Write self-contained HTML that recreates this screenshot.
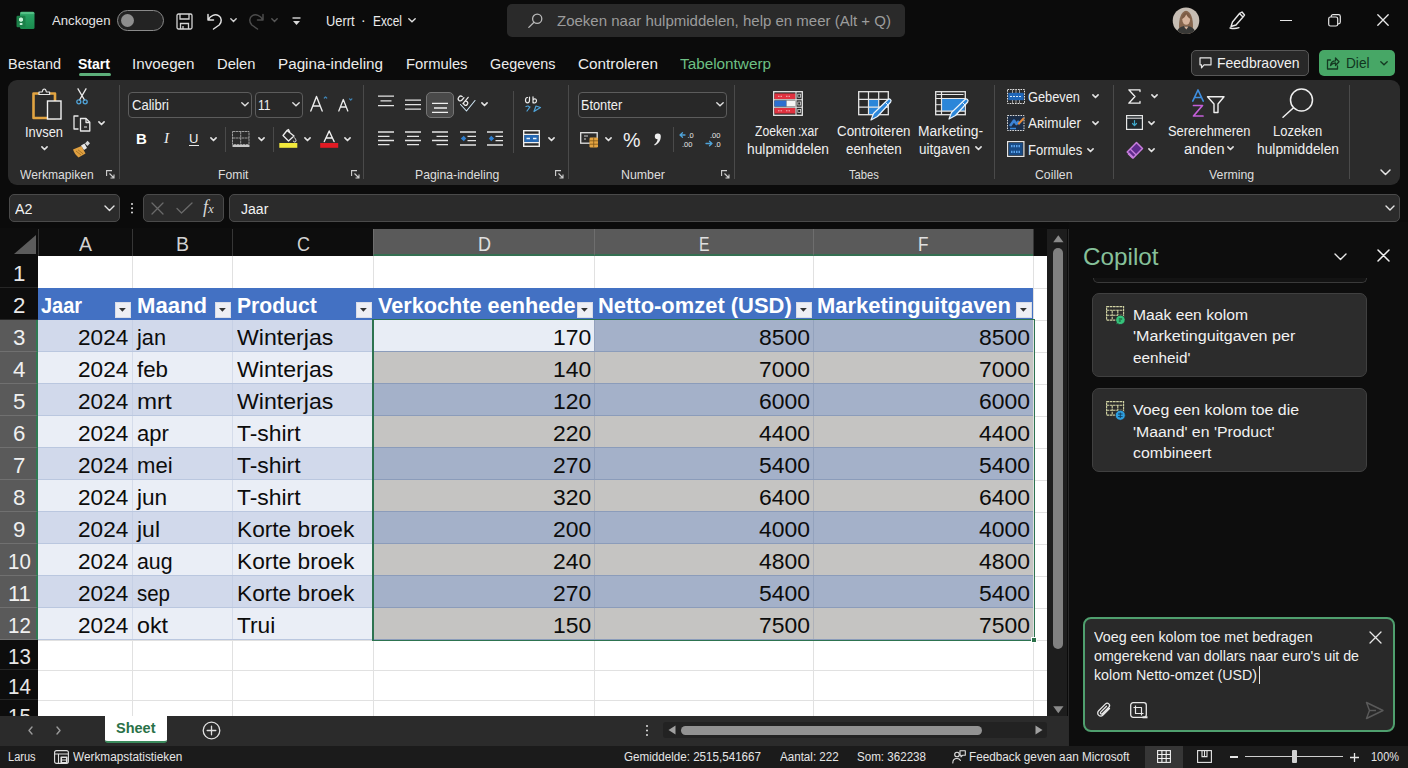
<!DOCTYPE html>
<html lang="nl"><head><meta charset="utf-8"><title>Excel</title>
<style>
*{box-sizing:border-box;margin:0;padding:0}
html,body{width:1408px;height:768px;overflow:hidden;background:#0b0b0b;font-family:"Liberation Sans",sans-serif;color:#e8e8e8}
body{position:relative}
.a{position:absolute}
.t{position:absolute;white-space:nowrap;line-height:1}
svg{position:absolute;overflow:visible}
/* title */
#search{left:507px;top:4px;width:398px;height:33px;background:#2a2a2a;border-radius:5px}
/* tabs */
.tab{font-size:16px;color:#ececec;top:55px}
/* ribbon */
#ribbon{left:8px;top:79.500px;width:1392px;height:105px;background:#2b2b2b;border-radius:9px}
.gl{font-size:13px;color:#d8d8d8;top:168px}
.sep{width:1px;background:#4a4a4a;top:88px;height:92px}
.rb{font-size:14.5px;color:#f0f0f0}
.combo{background:#282828;border:1px solid #5c5c5c;border-radius:4px;height:25px}
/* formula bar */
.fb{background:#2b2b2b;border:1px solid #4a4a4a;border-radius:5px;top:194px;height:28px}
/* grid */
#sheet{left:0;top:228px;width:1047px;height:488px;background:#fff;overflow:hidden}
.ch{top:1px;height:27px;background:#0d0d0d;color:#e2e2e2;font-size:21px;text-align:center;line-height:29px}
.ch.sel{background:#595959;border-bottom:2px solid #3c7a55}
.rh{left:0;width:38px;background:#0d0d0d;color:#ededed;font-size:22px;text-align:center;border-bottom:1px solid #2b2b2b}
.rh.sel{background:#5b5b5b;border-bottom:1px solid #6d6d6d;border-right:2px solid #3c7a55}
.c{position:absolute;font-size:24px;color:#111;white-space:nowrap;overflow:hidden}
.c span{position:absolute;top:0;line-height:inherit;display:inline-block;transform-origin:0 50%}
.c span.r{transform-origin:100% 50%}
.hd{background:#4472c4;color:#fff;font-weight:bold}
.fbtn{position:absolute;width:16px;height:16px;background:#e9edf4;border:1px solid #c9d1e0;right:2px;bottom:3px}
.fbtn:after{content:"";position:absolute;left:3px;top:5px;border-left:4px solid transparent;border-right:4px solid transparent;border-top:5px solid #333}
/* copilot */
.card{background:#2c2c2c;border:1px solid #404040;border-radius:7px;left:1092px;width:275px}
.ct{font-size:15.5px;color:#f2f2f2;line-height:21.5px;position:absolute;white-space:nowrap}
/* status */
#status{left:0;top:746px;width:1408px;height:22px;background:#1b1b1b}
.st{font-size:12.5px;color:#e6e6e6;top:751px}
</style></head><body>
<!-- TITLE BAR -->
<svg style="left:16px;top:11px" width="19" height="19" viewBox="0 0 19 19">
 <defs><linearGradient id="xg" x1="0" y1="0" x2="0" y2="1"><stop offset="0" stop-color="#3fb274"/><stop offset=".25" stop-color="#27a062"/><stop offset="1" stop-color="#1a8a4d"/></linearGradient></defs>
 <rect x="4" y=".7" width="14.500" height="17.300" rx="1.500" fill="url(#xg)"/>
 <rect x="4.500" y=".9" width="13.500" height="2" rx="1" fill="#5cc48c" opacity=".8"/>
 <rect x=".5" y="4.700" width="9" height="11.600" rx="1.200" fill="#1c8049"/>
 <path d="M3 7.500 5 6.300 7 7.500v2.300L5 11 3 9.800zM3.800 12h2.600v2H3.800z" fill="#c9f2da"/>
</svg>
<div class="t" style="left:51.5px;top:14.3px;font-size:13.5px;color:#e4e4e4;transform:scaleX(0.9742);transform-origin:0 0;">Anckogen</div>
<div class="a" style="left:117px;top:10px;width:47px;height:21px;border:1.5px solid #8a8a8a;border-radius:11px;background:#232323"></div>
<div class="a" style="left:121px;top:14px;width:13px;height:13px;border-radius:50%;background:#8e8e8e"></div>
<!-- save -->
<svg style="left:176px;top:13px" width="17" height="17" viewBox="0 0 17 17" fill="none" stroke="#d4d4d4" stroke-width="1.3">
 <rect x="1" y="1" width="15" height="15" rx="1.5"/><path d="M4 1v5h9V1M4.5 16v-5.5h8V16M7 13v3"/>
</svg>
<!-- undo -->
<svg style="left:206px;top:12px" width="17" height="18" viewBox="0 0 17 18" fill="none" stroke="#e0e0e0" stroke-width="1.5" stroke-linecap="round" stroke-linejoin="round">
 <path d="M2 2.5v5.5h5.5M2.3 7.6C4.5 3.6 9 1.6 12.6 3.6c3.4 2 3.4 6.6 0.6 9.4L7.5 17"/>
</svg>
<svg style="left:230px;top:18px" width="7" height="5" viewBox="0 0 7 5" fill="none" stroke="#d0d0d0" stroke-width="1.4" stroke-linecap="round"><path d="M.8.8 3.5 3.6 6.2.8"/></svg>
<!-- redo dim -->
<svg style="left:248px;top:12px" width="17" height="18" viewBox="0 0 17 18" fill="none" stroke="#4c4c4c" stroke-width="1.5" stroke-linecap="round" stroke-linejoin="round">
 <path d="M15 2.5v5.5H9.5M14.7 7.6C12.5 3.6 8 1.6 4.4 3.6 1 5.6 1 10.200 3.800 13l5.700 4"/>
</svg>
<svg style="left:271px;top:18px" width="7" height="5" viewBox="0 0 7 5" fill="none" stroke="#565656" stroke-width="1.4" stroke-linecap="round"><path d="M.8.8 3.5 3.6 6.2.8"/></svg>
<!-- customize -->
<svg style="left:292px;top:17px" width="9" height="9" viewBox="0 0 9 9"><path d="M.5 1h8" stroke="#d8d8d8" stroke-width="1.4"/><path d="M1 4h7L4.500 8z" fill="#d8d8d8"/></svg>
<div class="t" style="left:326px;top:14px;font-size:14px;color:#ececec;transform:scaleX(0.9161);transform-origin:0 0;">Uerrt</div>
<div class="t" style="left:361px;top:13px;font-size:14px;color:#ececec">&middot;</div>
<div class="t" style="left:372.5px;top:14px;font-size:14px;color:#ececec;transform:scaleX(0.8471);transform-origin:0 0;">Excel</div>
<svg style="left:408px;top:18px" width="8" height="5" viewBox="0 0 8 5" fill="none" stroke="#e0e0e0" stroke-width="1.4" stroke-linecap="round"><path d="M.8.8 4 3.800 7.200.8"/></svg>
<!-- search -->
<div class="a" id="search"></div>
<svg style="left:528px;top:13px" width="15" height="15" viewBox="0 0 15 15" fill="none" stroke="#b8b8b8" stroke-width="1.3" stroke-linecap="round"><circle cx="9.2" cy="5.800" r="4.600"/><path d="M6 9.200.8 14.400"/></svg>
<div class="t" style="left:557px;top:13px;font-size:15px;color:#9c9c9c">Zoeken naar hulpmiddelen, help en meer (Alt + Q)</div>
<!-- avatar -->
<svg style="left:1172px;top:7px" width="28" height="28" viewBox="0 0 28 28">
 <defs><clipPath id="av"><circle cx="14" cy="13.700" r="13.300"/></clipPath></defs>
 <g clip-path="url(#av)"><rect width="28" height="28" fill="#c6bdb3"/>
 <path d="M7.800 28C6 18 7 5 14 3.800 21 5 22 18 20.200 28z" fill="#86664e"/>
 <ellipse cx="14.200" cy="12.500" rx="3.900" ry="5.200" fill="#d6b49c"/>
 <path d="M9.800 12c.3-4.500 2.500-6.500 4.700-6.300 2.300.2 3.800 2.500 3.800 6-1.800-.8-3.200-2.500-4-4.500-.8 2.300-2.500 4-4.500 4.800z" fill="#7c5c45"/>
 <path d="M4 28c.5-6 4.500-9 10-9s9.500 3 10 9z" fill="#383836"/>
 <path d="M12 19.500l2.300 3 2.200-3z" fill="#d2b19a"/></g>
</svg>
<!-- pen -->
<svg style="left:1228px;top:11px" width="18" height="18" viewBox="0 0 18 18" fill="none" stroke="#e8e8e8" stroke-width="1.400" stroke-linejoin="round" stroke-linecap="round">
 <path d="M11.500 2.500 14 1l2.500 3-1.500 2M11.500 2.500 15 6 8 14l-5 1.500L4.500 11z M2 17c3 .8 6 .8 9-.300"/>
</svg>
<!-- window controls -->
<div class="a" style="left:1280px;top:19.500px;width:12px;height:1.300px;background:#e6e6e6"></div>
<svg style="left:1328px;top:14px" width="13" height="13" viewBox="0 0 13 13" fill="none" stroke="#e6e6e6" stroke-width="1.200"><rect x=".7" y="3" width="9" height="9" rx="1.800"/><path d="M3.200 3V2.500c0-1 .8-1.800 1.800-1.800h5.500c1 0 1.800.8 1.800 1.800V8c0 1-.8 1.800-1.800 1.800h-.5"/></svg>
<svg style="left:1377px;top:14px" width="12" height="12" viewBox="0 0 12 12" stroke="#eaeaea" stroke-width="1.300" stroke-linecap="round"><path d="M.8.8 11.200 11.200M11.200.8.8 11.200"/></svg>
<!-- TABS -->
<div class="t" style="left:8px;top:55.6px;font-size:15.5px;color:#ececec;transform:scaleX(0.9318);transform-origin:0 0;">Bestand</div>
<div class="t" style="left:78px;top:55.6px;font-size:15.5px;color:#fff;font-weight:bold;transform:scaleX(0.9061);transform-origin:0 0;">Start</div>
<div class="a" style="left:78.500px;top:73.400px;width:32.500px;height:2.500px;border-radius:1.500px;background:#5cae79"></div>
<div class="t" style="left:132px;top:55.6px;font-size:15.5px;color:#ececec;transform:scaleX(0.9799);transform-origin:0 0;">Invoegen</div>
<div class="t" style="left:217px;top:55.6px;font-size:15.5px;color:#ececec;transform:scaleX(0.9506);transform-origin:0 0;">Delen</div>
<div class="t" style="left:278px;top:55.6px;font-size:15.5px;color:#ececec;transform:scaleX(0.9826);transform-origin:0 0;">Pagina-indeling</div>
<div class="t" style="left:406px;top:55.6px;font-size:15.5px;color:#ececec;transform:scaleX(0.9520);transform-origin:0 0;">Formules</div>
<div class="t" style="left:490px;top:55.6px;font-size:15.5px;color:#ececec;transform:scaleX(0.9270);transform-origin:0 0;">Gegevens</div>
<div class="t" style="left:578px;top:55.6px;font-size:15.5px;color:#ececec;transform:scaleX(0.9877);transform-origin:0 0;">Controleren</div>
<div class="t" style="left:680px;top:55.6px;font-size:15.5px;color:#6ec084;transform:scaleX(0.9870);transform-origin:0 0;">Tabelontwerp</div>
<div class="a" style="left:1191px;top:50px;width:118px;height:26px;background:#282828;border:1px solid #585858;border-radius:5px"></div>
<svg style="left:1199px;top:57px" width="13" height="12" viewBox="0 0 13 12" fill="none" stroke="#e6e6e6" stroke-width="1.200" stroke-linejoin="round"><path d="M1 .8h11v7H5L2.500 10.800V7.800H1z"/></svg>
<div class="t" style="left:1216.5px;top:55px;font-size:15px;color:#f0f0f0;transform:scaleX(0.9333);transform-origin:0 0;">Feedbraoven</div>
<div class="a" style="left:1319px;top:50px;width:76px;height:26px;background:#47a766;border-radius:5px"></div>
<svg style="left:1326px;top:56px" width="14" height="14" viewBox="0 0 14 14" fill="none" stroke="#153a22" stroke-width="1.300" stroke-linejoin="round" stroke-linecap="round"><path d="M4.500 4H1.500v9h10V10M4.500 9.500C5 6 7 4.800 9.500 4.800V2L13 5.800 9.500 9.500V7C7.500 7 6 7.500 4.500 9.500z"/></svg>
<div class="t" style="left:1346px;top:55px;font-size:15.5px;color:#113520;transform:scaleX(0.8801);transform-origin:0 0;">Diel</div>
<svg style="left:1380px;top:61px" width="8" height="5" viewBox="0 0 8 5" fill="none" stroke="#153a22" stroke-width="1.400" stroke-linecap="round"><path d="M.8.8 4 3.800 7.200.8"/></svg>
<!-- RIBBON -->
<div class="a" id="ribbon"></div>
<!-- separators -->
<div class="a sep" style="left:119px;top:85px;height:94px"></div>
<div class="a sep" style="left:363px;top:85px;height:94px"></div>
<div class="a sep" style="left:568px;top:85px;height:94px"></div>
<div class="a sep" style="left:734px;top:85px;height:94px"></div>
<div class="a sep" style="left:994px;top:85px;height:94px"></div>
<div class="a sep" style="left:1113px;top:85px;height:94px"></div>
<div class="a sep" style="left:1349px;top:85px;height:94px"></div>
<div class="a sep" style="left:225px;top:127px;height:25px"></div>
<div class="a sep" style="left:273px;top:127px;height:25px"></div>
<div class="a sep" style="left:513px;top:91px;height:62px"></div>
<div class="a sep" style="left:673px;top:127px;height:25px"></div>
<!-- group labels -->
<div class="t" style="left:19.7px;top:169.4px;font-size:12.8px;color:#dedede;transform:scaleX(0.9447);transform-origin:0 0;">Werkmapiken</div>
<div class="t" style="left:217.5px;top:169.4px;font-size:12.8px;color:#dedede;transform:scaleX(0.9531);transform-origin:0 0;">Fomit</div>
<div class="t" style="left:415.4px;top:169.4px;font-size:12.8px;color:#dedede;transform:scaleX(0.9553);transform-origin:0 0;">Pagina-indeling</div>
<div class="t" style="left:620.6px;top:169.4px;font-size:12.8px;color:#dedede;transform:scaleX(0.9665);transform-origin:0 0;">Number</div>
<div class="t" style="left:849px;top:169.4px;font-size:12.8px;color:#dedede;transform:scaleX(0.8783);transform-origin:0 0;">Tabes</div>
<div class="t" style="left:1035.3px;top:169.4px;font-size:12.8px;color:#dedede;transform:scaleX(0.9583);transform-origin:0 0;">Coillen</div>
<div class="t" style="left:1209.3px;top:169.4px;font-size:12.8px;color:#dedede;transform:scaleX(0.9625);transform-origin:0 0;">Verming</div>
<!-- dialog launchers -->
<svg style="left:106px;top:170px" width="9" height="9" viewBox="0 0 9 9" fill="none" stroke="#d0d0d0" stroke-width="1.100"><path d="M.6 6V.6H6M3.500 3.500 8 8M8 4.500V8H4.500"/></svg>
<svg style="left:351px;top:170px" width="9" height="9" viewBox="0 0 9 9" fill="none" stroke="#d0d0d0" stroke-width="1.100"><path d="M.6 6V.6H6M3.500 3.500 8 8M8 4.500V8H4.500"/></svg>
<svg style="left:555px;top:170px" width="9" height="9" viewBox="0 0 9 9" fill="none" stroke="#d0d0d0" stroke-width="1.100"><path d="M.6 6V.6H6M3.500 3.500 8 8M8 4.500V8H4.500"/></svg>
<svg style="left:721px;top:170px" width="9" height="9" viewBox="0 0 9 9" fill="none" stroke="#d0d0d0" stroke-width="1.100"><path d="M.6 6V.6H6M3.500 3.500 8 8M8 4.500V8H4.500"/></svg>
<!-- === Clipboard group === -->
<svg style="left:32px;top:88px" width="30" height="32" viewBox="0 0 30 32" fill="none">
 <path d="M1.500 5.500h21.500v24.500H1.500z" stroke="#e2a441" stroke-width="2.600" stroke-linejoin="round"/>
 <path d="M7 6.500V4h3.200C10.600 1.800 11.600 1 12.300 1s1.700.8 2.100 3H17.600v2.500z" fill="#2a2a2a" stroke="#e6e6e6" stroke-width="1.200" stroke-linejoin="round"/>
 <rect x="15.500" y="13" width="13.500" height="18" fill="#2e2e2e" stroke="#f2f2f2" stroke-width="1.400"/>
</svg>
<div class="t" style="left:25.3px;top:124.8px;font-size:14.5px;color:#f0f0f0;transform:scaleX(0.8895);transform-origin:0 0;">Invsen</div>
<svg style="left:41px;top:146px" width="7" height="5" viewBox="0 0 7 5" fill="none" stroke="#e2e2e2" stroke-width="1.650" stroke-linecap="round" stroke-linejoin="round"><path d="M.9.900 3.500 3.500 6.100.9"/></svg>
<!-- scissors -->
<svg style="left:76px;top:88px" width="12" height="17" viewBox="0 0 12 17" fill="none" stroke-linecap="round">
 <path d="M2 .8 8.500 12M10 .8 3.500 12" stroke="#ececec" stroke-width="1.300"/>
 <circle cx="2.800" cy="13.800" r="2" stroke="#4fa3d8" stroke-width="1.300"/><circle cx="9.200" cy="13.800" r="2" stroke="#4fa3d8" stroke-width="1.300"/>
</svg>
<!-- copy -->
<svg style="left:73px;top:114px" width="18" height="18" viewBox="0 0 18 18" fill="none" stroke="#e8e8e8" stroke-width="1.300" stroke-linejoin="round">
 <path d="M5.500 2H1v13h4.500"/><path d="M7.500 4.500h5.500l3.800 3.800V17H7.500z"/><path d="M13 4.500v4h3.800"/><path d="M11 13h3" stroke-width="1"/>
</svg>
<svg style="left:98px;top:121px" width="7" height="5" viewBox="0 0 7 5" fill="none" stroke="#e2e2e2" stroke-width="1.650" stroke-linecap="round" stroke-linejoin="round"><path d="M.9.900 3.500 3.500 6.100.9"/></svg>
<!-- brush -->
<svg style="left:72px;top:140px" width="19" height="18" viewBox="0 0 19 18">
 <path d="M1 9.500 9.500 6 13.500 13.500 6.500 17.500C4 15.500 2 12.500 1 9.500z" fill="#e0a040"/>
 <path d="M9 5.500 12.500 3.500 15 8 12 10z" fill="#e8e8e8"/>
 <path d="M13 3.500 15.500.8 18 3.200 15.500 6z" fill="#d8d8d8"/>
 <path d="M4 11l5 4M6 9.800l5 4" stroke="#9a6a20" stroke-width=".8"/>
</svg>
<!-- === Font group === -->
<div class="a combo" style="left:128px;top:91.500px;width:124px;height:26px"></div>
<div class="t" style="left:132px;top:98px;font-size:14px;color:#f0f0f0;transform:scaleX(0.9325);transform-origin:0 0;">Calibri</div>
<svg style="left:241px;top:102px" width="8" height="5" viewBox="0 0 8 5" fill="none" stroke="#e0e0e0" stroke-width="1.400" stroke-linecap="round"><path d="M.8.8 4 3.800 7.200.8"/></svg>
<div class="a combo" style="left:254.500px;top:91.500px;width:48px;height:26px"></div>
<div class="t" style="left:258.4px;top:98px;font-size:14px;color:#f0f0f0;transform:scaleX(0.8601);transform-origin:0 0;">11</div>
<svg style="left:292px;top:102px" width="8" height="5" viewBox="0 0 8 5" fill="none" stroke="#e0e0e0" stroke-width="1.400" stroke-linecap="round"><path d="M.8.8 4 3.800 7.200.8"/></svg>
<!-- A grow / shrink -->
<svg style="left:310px;top:95px" width="18" height="17" viewBox="0 0 18 17" fill="none" stroke="#ececec" stroke-width="1.400" stroke-linecap="round" stroke-linejoin="round"><path d="M.8 16 6.500 1.500 12.200 16M2.800 11h7.400"/><path d="M14.300 3 15.500 1.800 16.700 3" stroke="#3f86b8" stroke-width="1.200"/></svg>
<svg style="left:338px;top:97px" width="15" height="15" viewBox="0 0 15 15" fill="none" stroke="#ececec" stroke-width="1.300" stroke-linecap="round" stroke-linejoin="round"><path d="M.8 14 5.300 2.500 9.800 14M2.400 10h5.800"/><path d="M11.500 1.800 12.700 3 13.900 1.800" stroke="#3f86b8" stroke-width="1.200"/></svg>
<!-- B I U -->
<div class="t" style="left:136px;top:131px;font-size:15px;font-weight:bold;color:#fff">B</div>
<div class="t" style="left:164px;top:131px;font-size:15px;font-style:italic;font-family:'Liberation Serif',serif;color:#f0f0f0">I</div>
<div class="t" style="left:189px;top:132px;font-size:13px;color:#f0f0f0">U</div>
<div class="a" style="left:189px;top:145px;width:9.500px;height:1.200px;background:#e8e8e8"></div>
<svg style="left:209.500px;top:137px" width="7" height="5" viewBox="0 0 7 5" fill="none" stroke="#e2e2e2" stroke-width="1.650" stroke-linecap="round" stroke-linejoin="round"><path d="M.9.900 3.500 3.500 6.100.9"/></svg>
<!-- borders -->
<svg style="left:232px;top:131px" width="18" height="16" viewBox="0 0 18 16" fill="none"><path d="M.5.500h16.500v13H.5zM8.700.5v13M.5 7h16.500" stroke="#9c9c9c" stroke-width="1" stroke-dasharray="2.500 .500"/><path d="M.5 15h17" stroke="#efefef" stroke-width="1.600"/></svg>
<svg style="left:257.500px;top:137px" width="7" height="5" viewBox="0 0 7 5" fill="none" stroke="#e2e2e2" stroke-width="1.650" stroke-linecap="round" stroke-linejoin="round"><path d="M.9.900 3.500 3.500 6.100.9"/></svg>
<!-- fill -->
<svg style="left:278.500px;top:129px" width="19" height="19" viewBox="0 0 19 19" fill="none"><path d="M8 1.500 4 6.500 9.500 12 15 7z M8 1.500 9.500.5 11 3.500" stroke="#ececec" stroke-width="1.300" stroke-linejoin="round"/><path d="M15.500 8.500c1 1.500 1.500 2.500 1.500 3.200a1.300 1.300 0 0 1-2.600 0" stroke="#ececec" stroke-width="1"/><rect x=".3" y="14" width="18" height="4.800" fill="#f2e93c"/></svg>
<svg style="left:304px;top:137px" width="7" height="5" viewBox="0 0 7 5" fill="none" stroke="#e2e2e2" stroke-width="1.650" stroke-linecap="round" stroke-linejoin="round"><path d="M.9.900 3.500 3.500 6.100.9"/></svg>
<!-- font color -->
<svg style="left:319.500px;top:130px" width="19" height="18" viewBox="0 0 19 18" fill="none"><path d="M4.300 11.500 9.200 1 14.100 11.500M6 8h6.400" stroke="#f0f0f0" stroke-width="1.400" stroke-linejoin="round" stroke-linecap="round"/><rect x=".2" y="13" width="18" height="4.800" fill="#e21b24"/></svg>
<svg style="left:344px;top:137px" width="7" height="5" viewBox="0 0 7 5" fill="none" stroke="#e2e2e2" stroke-width="1.650" stroke-linecap="round" stroke-linejoin="round"><path d="M.9.900 3.500 3.500 6.100.9"/></svg>
<!-- === Alignment group === -->
<svg style="left:377.500px;top:95px" width="16" height="12" viewBox="0 0 16 12" stroke="#e4e4e4" stroke-width="1.300"><path d="M0 1.200h16M2.500 5.900h11M0 10.600h16"/></svg>
<svg style="left:405px;top:98.500px" width="16" height="12" viewBox="0 0 16 12" stroke="#e4e4e4" stroke-width="1.300"><path d="M0 1.200h16M0 5.700h16M0 10.200h16"/></svg>
<div class="a" style="left:426px;top:91.500px;width:27.500px;height:26.500px;background:#494949;border:1px solid #757575;border-radius:5px"></div>
<svg style="left:431.500px;top:102px" width="16" height="12" viewBox="0 0 16 12" stroke="#f0f0f0" stroke-width="1.300"><path d="M0 1.300h16M2 6h13M0 10.400h16"/></svg>
<!-- orientation -->
<svg style="left:459px;top:95px" width="17" height="17" viewBox="0 0 17 17" fill="none" stroke-linecap="round" stroke-linejoin="round"><g transform="translate(-1.500 -1.500) rotate(40 6 6) scale(1.300)" stroke="#ececec" stroke-width=".95"><path d="M2.500 3.500c-1.300 0-1.800 1-1.800 2s.6 1.900 1.700 1.900 1.600-.8 1.600-2V3.300M6.300 1v6.300M6.300 5c.4-1.200 3-1.500 3 .7S6.800 7.600 6.300 6.400"/></g><path d="M1.500 9.500 7.500 16 16 5.500" stroke="#cfe6f5" stroke-width="1.100"/></svg>
<svg style="left:481px;top:102px" width="7" height="5" viewBox="0 0 7 5" fill="none" stroke="#e2e2e2" stroke-width="1.650" stroke-linecap="round" stroke-linejoin="round"><path d="M.9.900 3.500 3.500 6.100.9"/></svg>
<!-- row 2 -->
<svg style="left:377.500px;top:130.800px" width="16" height="15" viewBox="0 0 16 15" stroke="#e4e4e4" stroke-width="1.300"><path d="M0 1h16M0 5.300h11.500M0 9.500h16M0 13.700h11.500"/></svg>
<svg style="left:405px;top:130.800px" width="16" height="15" viewBox="0 0 16 15" stroke="#e4e4e4" stroke-width="1.300"><path d="M0 1h16M2 5.300h12M0 9.500h16M2 13.700h12"/></svg>
<svg style="left:431.500px;top:130.800px" width="16" height="15" viewBox="0 0 16 15" stroke="#e4e4e4" stroke-width="1.300"><path d="M0 1h16M4.500 5.300h11.500M0 9.500h16M4.500 13.700h11.500"/></svg>
<svg style="left:459.500px;top:130.800px" width="16" height="15" viewBox="0 0 16 15" fill="none"><path d="M0 1h16M7.500 5.400h8.500M7.500 9.700h8.500M0 14h16" stroke="#e4e4e4" stroke-width="1.300"/><path d="M.8 7.500 3.800 4.800 6.200 7.500 3.800 10.200z" fill="#2f7fcf"/></svg>
<svg style="left:486.500px;top:130.800px" width="16" height="15" viewBox="0 0 16 15" fill="none"><path d="M0 1h16M8.500 5.400h7.500M8.500 9.700h7.500M0 14h16" stroke="#e4e4e4" stroke-width="1.300"/><path d="M1.800 7.500 4.200 4.800 7.200 7.500 4.200 10.200z" fill="#2f7fcf"/></svg>
<!-- wrap -->
<svg style="left:525px;top:96px" width="17" height="17" viewBox="0 0 17 17" fill="none" stroke-linecap="round" stroke-linejoin="round"><path d="M2.500 1.500c-1.500 0-2 1.500-2 2.800s.7 2.500 2 2.500 2-1 2-2.600V1M8 .8v6M8 4c.5-1.500 3.500-1.800 3.500.8S8.500 7.500 8 6" stroke="#ececec" stroke-width="1.200"/><path d="M1 10.500c2-1 3-.5 3.500 1M2 15l3-4" stroke="#4fa3d8" stroke-width="1.200"/><path d="M9 15.500 11 10l4.500 1.500z" stroke="#4fa3d8" stroke-width="1.200"/></svg>
<!-- merge -->
<svg style="left:522.500px;top:130px" width="17" height="17" viewBox="0 0 17 17" fill="none"><rect x=".7" y=".7" width="15.600" height="15.600" stroke="#efefef" stroke-width="1.400"/><rect x="1.500" y="5" width="14" height="7" fill="#2468b4"/><path d="M.7 4.300h15.600M.7 12.700h15.600" stroke="#efefef" stroke-width="1.200"/><path d="M3.500 8.500h3.500M10 8.500h3.500" stroke="#e8f2fa" stroke-width="1.400"/></svg>
<svg style="left:547.500px;top:137px" width="7" height="5" viewBox="0 0 7 5" fill="none" stroke="#e2e2e2" stroke-width="1.650" stroke-linecap="round" stroke-linejoin="round"><path d="M.9.900 3.500 3.500 6.100.9"/></svg>
<!-- === Number group === -->
<div class="a combo" style="left:577.500px;top:91.500px;width:149px;height:26px"></div>
<div class="t" style="left:581.3px;top:98px;font-size:14px;color:#f0f0f0;transform:scaleX(0.9158);transform-origin:0 0;">&#1041;tonter</div>
<svg style="left:715.500px;top:102px" width="8" height="5" viewBox="0 0 8 5" fill="none" stroke="#e0e0e0" stroke-width="1.400" stroke-linecap="round"><path d="M.8.8 4 3.800 7.200.8"/></svg>
<!-- accounting -->
<svg style="left:580px;top:132px" width="19" height="16" viewBox="0 0 19 16" fill="none"><rect x=".7" y=".7" width="16.500" height="10.500" stroke="#e2e2e2" stroke-width="1.300"/><path d="M4 4h4M4 7h2" stroke="#cfcfcf" stroke-width="1"/><rect x="9.500" y="5.500" width="8.500" height="10" rx="1.200" fill="#e3a341"/><path d="M9.500 8.800h8.500M9.500 12.200h8.500M13.700 5.500v10" stroke="#7a5418" stroke-width=".8"/></svg>
<svg style="left:605px;top:137px" width="7" height="5" viewBox="0 0 7 5" fill="none" stroke="#e2e2e2" stroke-width="1.650" stroke-linecap="round" stroke-linejoin="round"><path d="M.9.900 3.500 3.500 6.100.9"/></svg>
<div class="t" style="left:622.5px;top:129px;font-size:21px;color:#f2f2f2;transform:scaleX(0.9372);transform-origin:0 0;">%</div>
<svg style="left:653px;top:133px" width="9" height="13" viewBox="0 0 9 13"><path d="M4.800.5a2.900 2.900 0 0 1 3 3c0 4-2.500 7.500-6 9l-.6-1c2-1.300 3.200-3 3.400-5.200a2.900 2.900 0 0 1 .2-5.800z" fill="#efefef"/></svg>
<!-- inc/dec decimal -->
<svg style="left:679px;top:131px" width="18" height="17" viewBox="0 0 18 17" fill="none"><path d="M1 4h5M3.500 1.800 1 4l2.500 2.200" stroke="#4fa3d8" stroke-width="1.300" stroke-linecap="round" stroke-linejoin="round"/><text x="8.500" y="7" font-family="Liberation Sans" font-size="7.500" fill="#e8e8e8">.0</text><text x="3" y="16" font-family="Liberation Sans" font-size="7.500" fill="#e8e8e8">.00</text></svg>
<svg style="left:705px;top:131px" width="18" height="17" viewBox="0 0 18 17" fill="none"><text x="5" y="7" font-family="Liberation Sans" font-size="7.500" fill="#e8e8e8">.00</text><path d="M1 12.500h6M4.500 10.300 7 12.500 4.500 14.700" stroke="#4fa3d8" stroke-width="1.300" stroke-linecap="round" stroke-linejoin="round"/><text x="9.500" y="16" font-family="Liberation Sans" font-size="7.500" fill="#e8e8e8">.0</text></svg>
<!-- === Tabes group === -->
<!-- conditional format icon -->
<svg style="left:773px;top:91px" width="30" height="25" viewBox="0 0 30 25" fill="none">
 <rect x=".7" y=".7" width="28.600" height="23.600" fill="#2a2a2a" stroke="#e6e6e6" stroke-width="1.300"/>
 <rect x="1.500" y="2.500" width="21" height="5.500" fill="#e0313f"/><rect x="1.500" y="17" width="21" height="5.500" fill="#e0313f"/>
 <rect x="1.500" y="9.500" width="12" height="6" fill="#2d6fd0"/><rect x="13.500" y="9.500" width="9" height="6" fill="#f4f4f4"/>
 <path d="M23 .7v23.600M.7 8.700h28.600M.7 16.200h28.600" stroke="#e6e6e6" stroke-width="1.100"/>
 <rect x="24.800" y="3.200" width="2.800" height="3" stroke="#d0d0d0" stroke-width=".8"/><rect x="24.800" y="11" width="2.800" height="3" stroke="#d0d0d0" stroke-width=".8"/><rect x="24.800" y="18.500" width="2.800" height="3" stroke="#d0d0d0" stroke-width=".8"/>
 <path d="M5 5.300h5M13 5.300h5M5 19.800h5M13 19.800h5" stroke="#f6b5bb" stroke-width="1" stroke-dasharray="1.500 1"/>
</svg>
<div class="t" style="left:755.3px;top:124.4px;font-size:14px;color:#f0f0f0;transform:scaleX(0.8677);transform-origin:0 0;">Zoeken&#8201;:xar</div>
<div class="t" style="left:746.5px;top:141.9px;font-size:14px;color:#f0f0f0;transform:scaleX(0.9846);transform-origin:0 0;">hulpmiddelen</div>
<!-- table + pen icon 2 -->
<svg style="left:858px;top:91px" width="35" height="30" viewBox="0 0 35 30" fill="none">
 <rect x=".7" y=".7" width="29.600" height="23" fill="#2a2a2a" stroke="#e6e6e6" stroke-width="1.300"/>
 <rect x="11" y="8.500" width="10" height="14.500" fill="#2b86d9"/>
 <path d="M.7 8.300h29.600M.7 16.200h29.600M10.500.7v23M20.700.7v23" stroke="#e6e6e6" stroke-width="1.200"/>
 <path d="M30 8.500c1.500-1.500 4 .800 2.700 2.500L19.500 25.500 13 29l2.500-6.500z" fill="#2b86d9" stroke="#eaf3fb" stroke-width="1.200" stroke-linejoin="round"/>
 <path d="M27.500 11.500l2.500 2.500" stroke="#eaf3fb" stroke-width="1"/>
</svg>
<div class="t" style="left:836.9px;top:124.4px;font-size:14px;color:#f0f0f0;transform:scaleX(0.9540);transform-origin:0 0;">Controiteren</div>
<div class="t" style="left:845.9px;top:141.9px;font-size:14px;color:#f0f0f0;transform:scaleX(0.9539);transform-origin:0 0;">eenheten</div>
<!-- table + pen icon 3 -->
<svg style="left:934.500px;top:91px" width="35" height="30" viewBox="0 0 35 30" fill="none">
 <rect x=".7" y=".7" width="29.600" height="23" fill="#2a2a2a" stroke="#e6e6e6" stroke-width="1.300"/>
 <rect x="7" y="8" width="22.500" height="12" fill="#2b86d9"/>
 <path d="M.7 7.500h29.600M.7 20.200h29.600M6.500.7v23M1.500 3.500h27" stroke="#e6e6e6" stroke-width="1.200"/>
 <path d="M1 13.700h5" stroke="#e6e6e6" stroke-width="1"/>
 <path d="M30 8.500c1.500-1.500 4 .800 2.700 2.500L20.500 24.500 14 28l2.500-6.500z" fill="#2b86d9" stroke="#eaf3fb" stroke-width="1.200" stroke-linejoin="round"/>
 <path d="M27.500 11.500l2.500 2.500" stroke="#eaf3fb" stroke-width="1"/>
</svg>
<div class="t" style="left:918.4px;top:124.4px;font-size:14px;color:#f0f0f0;transform:scaleX(0.9844);transform-origin:0 0;">Marketing-</div>
<div class="t" style="left:919px;top:141.9px;font-size:14px;color:#f0f0f0;transform:scaleX(0.9635);transform-origin:0 0;">uitgaven</div>
<svg style="left:974.500px;top:146px" width="7" height="5" viewBox="0 0 7 5" fill="none" stroke="#e2e2e2" stroke-width="1.650" stroke-linecap="round" stroke-linejoin="round"><path d="M.9.900 3.500 3.500 6.100.9"/></svg>
<!-- === Coillen group === -->
<svg style="left:1007px;top:88.500px" width="18" height="15" viewBox="0 0 18 15" fill="none"><rect x=".5" y=".5" width="17" height="14" fill="#2a2a2a" stroke="#e2e2e2" stroke-width="1" stroke-dasharray="1.600 1"/><rect x="1.300" y="3.800" width="15.400" height="7.400" fill="#1f66b8"/><path d="M3 7.500h12" stroke="#d6e8f8" stroke-width="1" stroke-dasharray="2 1"/><path d="M5.500.5v3.500M9 .5v3.500M12.500.5v3.500M5.500 11v3.500M9 11v3.500M12.500 11v3.500" stroke="#cfcfcf" stroke-width=".7"/></svg>
<div class="t" style="left:1028.4px;top:89.5px;font-size:14px;color:#f0f0f0;transform:scaleX(0.9151);transform-origin:0 0;">Gebeven</div>
<svg style="left:1092px;top:94px" width="7" height="5" viewBox="0 0 7 5" fill="none" stroke="#e2e2e2" stroke-width="1.650" stroke-linecap="round" stroke-linejoin="round"><path d="M.9.900 3.500 3.500 6.100.9"/></svg>
<svg style="left:1007px;top:115px" width="18" height="16" viewBox="0 0 18 16" fill="none"><rect x=".5" y=".5" width="16.500" height="15" fill="#1b2d47" stroke="#dcdcdc" stroke-width="1" stroke-dasharray="1.600 1"/><path d="M3 11 7 5.500 9.500 9 12 6" stroke="#3b83d6" stroke-width="2.600" stroke-linejoin="round"/><path d="M10.500 8.500 16 2.500 17.500 4 12 10z" fill="#e58a3a"/><path d="M3 13.500h6" stroke="#3b8bdc" stroke-width="1.500"/></svg>
<div class="t" style="left:1028.4px;top:116.2px;font-size:14px;color:#f0f0f0;transform:scaleX(0.9630);transform-origin:0 0;">A&#640;imuler</div>
<svg style="left:1092px;top:120.500px" width="7" height="5" viewBox="0 0 7 5" fill="none" stroke="#e2e2e2" stroke-width="1.650" stroke-linecap="round" stroke-linejoin="round"><path d="M.9.900 3.500 3.500 6.100.9"/></svg>
<svg style="left:1007px;top:141px" width="18" height="16" viewBox="0 0 18 16" fill="none"><rect x=".6" y=".6" width="16.300" height="14.800" fill="#2a2a2a" stroke="#e6e6e6" stroke-width="1.200"/><rect x="1.800" y="1.800" width="13.900" height="12.400" fill="#174a86"/><path d="M4 5.200h9.500M4 10.900h9.500" stroke="#5aa2ea" stroke-width="2.200" stroke-dasharray="1.500 1"/></svg>
<div class="t" style="left:1028.4px;top:142.6px;font-size:14px;color:#f0f0f0;transform:scaleX(0.9289);transform-origin:0 0;">Formules</div>
<svg style="left:1087px;top:147.500px" width="7" height="5" viewBox="0 0 7 5" fill="none" stroke="#e2e2e2" stroke-width="1.650" stroke-linecap="round" stroke-linejoin="round"><path d="M.9.900 3.500 3.500 6.100.9"/></svg>
<!-- === Verming group === -->
<svg style="left:1128px;top:88.500px" width="13" height="15" viewBox="0 0 13 15" fill="none" stroke="#efefef" stroke-width="1.300" stroke-linejoin="round" stroke-linecap="round"><path d="M12 2.500V.8H.8L7 7.500.8 14.200H12V12.500"/></svg>
<svg style="left:1151px;top:94px" width="7" height="5" viewBox="0 0 7 5" fill="none" stroke="#e2e2e2" stroke-width="1.650" stroke-linecap="round" stroke-linejoin="round"><path d="M.9.900 3.500 3.500 6.100.9"/></svg>
<svg style="left:1126px;top:115px" width="17" height="15" viewBox="0 0 17 15" fill="none"><rect x=".6" y=".6" width="15.800" height="13.800" fill="#20262a" stroke="#e6e6e6" stroke-width="1.200"/><path d="M.6 3.200h15.800" stroke="#e6e6e6" stroke-width="1"/><path d="M8.500 5.500v5M6.500 8.500l2 2.200 2-2.200" stroke="#3fa7c9" stroke-width="1.200" stroke-linecap="round" stroke-linejoin="round"/></svg>
<svg style="left:1148px;top:120.500px" width="7" height="5" viewBox="0 0 7 5" fill="none" stroke="#e2e2e2" stroke-width="1.650" stroke-linecap="round" stroke-linejoin="round"><path d="M.9.900 3.500 3.500 6.100.9"/></svg>
<svg style="left:1126px;top:140.500px" width="18" height="18" viewBox="0 0 18 18" fill="none" stroke="#c77ddb" stroke-width="1.500" stroke-linejoin="round"><path d="M1.200 11 10.500 1.500 16.500 7.500 7.200 17z" fill="#5f2b8c"/><path d="M4.200 8 10.200 14" stroke-width="1.200"/><path d="M2.500 12.300l4.700 4.700" stroke-width="2.400"/></svg>
<svg style="left:1148px;top:147.500px" width="7" height="5" viewBox="0 0 7 5" fill="none" stroke="#e2e2e2" stroke-width="1.650" stroke-linecap="round" stroke-linejoin="round"><path d="M.9.900 3.500 3.500 6.100.9"/></svg>
<!-- AZ + funnel -->
<svg style="left:1192px;top:89px" width="33" height="28" viewBox="0 0 33 28" fill="none" stroke-linecap="round" stroke-linejoin="round"><path d="M.8 12 6 1 11.200 12M2.500 8.500h7" stroke="#3f8fe0" stroke-width="1.700"/><path d="M1.500 16.500h9L1.500 27h9.500" stroke="#c45fd9" stroke-width="1.700"/><path d="M15.500 7.800h16.500L26 15v8.500h-4V15z" stroke="#efefef" stroke-width="1.400"/></svg>
<div class="t" style="left:1167.5px;top:124.4px;font-size:14px;color:#f0f0f0;transform:scaleX(0.9207);transform-origin:0 0;">Sererehmeren</div>
<div class="t" style="left:1184px;top:141.9px;font-size:14px;color:#f0f0f0;transform:scaleX(1.0428);transform-origin:0 0;">anden</div>
<svg style="left:1227px;top:146px" width="7" height="5" viewBox="0 0 7 5" fill="none" stroke="#e2e2e2" stroke-width="1.650" stroke-linecap="round" stroke-linejoin="round"><path d="M.9.900 3.500 3.500 6.100.9"/></svg>
<!-- magnifier -->
<svg style="left:1282px;top:88px" width="32" height="30" viewBox="0 0 32 30" fill="none" stroke="#efefef" stroke-width="1.500" stroke-linecap="round"><circle cx="19.500" cy="12" r="11"/><path d="M11.500 19.800 1 29.200"/></svg>
<div class="t" style="left:1272.5px;top:124.4px;font-size:14px;color:#f0f0f0;transform:scaleX(0.9295);transform-origin:0 0;">Lozeken</div>
<div class="t" style="left:1256.5px;top:141.9px;font-size:14px;color:#f0f0f0;transform:scaleX(0.9846);transform-origin:0 0;">hulpmiddelen</div>
<svg style="left:1379.500px;top:168.500px" width="11" height="7" viewBox="0 0 11 7" fill="none" stroke="#e4e4e4" stroke-width="1.500" stroke-linecap="round" stroke-linejoin="round"><path d="M1 1 5.500 5.500 10 1"/></svg>
<!-- FORMULA BAR -->
<div class="a fb" style="left:9px;width:111px"></div>
<div class="t" style="left:15px;top:201px;font-size:15.5px;color:#f2f2f2;transform:scaleX(0.9230);transform-origin:0 0;">A2</div>
<svg style="left:103.500px;top:205px" width="11" height="7" viewBox="0 0 11 7" fill="none" stroke="#e4e4e4" stroke-width="1.400" stroke-linecap="round" stroke-linejoin="round"><path d="M1 1 5.500 5.500 10 1"/></svg>
<div class="a" style="left:130.500px;top:202.500px;width:2.200px;height:2.200px;border-radius:50%;background:#e0e0e0;box-shadow:0 4.200px 0 #e0e0e0,0 8.400px 0 #e0e0e0"></div>
<div class="a fb" style="left:143px;width:81px"></div>
<svg style="left:151px;top:201.500px" width="13" height="13" viewBox="0 0 13 13" stroke="#6a6a6a" stroke-width="1.300" stroke-linecap="round"><path d="M1 1 12 12M12 1 1 12"/></svg>
<svg style="left:175.500px;top:202px" width="17" height="12" viewBox="0 0 17 12" fill="none" stroke="#6a6a6a" stroke-width="1.300" stroke-linecap="round" stroke-linejoin="round"><path d="M1 6.500 5.500 11 16 1"/></svg>
<div class="t" style="left:203px;top:198px;font-size:18px;font-style:italic;font-family:'Liberation Serif',serif;color:#d8d8d8">f<span style="font-size:13px">x</span></div>
<div class="a fb" style="left:229px;width:1171px"></div>
<div class="t" style="left:241px;top:201px;font-size:15.5px;color:#f2f2f2;transform:scaleX(0.9054);transform-origin:0 0;">Jaar</div>
<svg style="left:1384.500px;top:204.500px" width="10" height="6" viewBox="0 0 10 6" fill="none" stroke="#e4e4e4" stroke-width="1.400" stroke-linecap="round" stroke-linejoin="round"><path d="M1 1 5 5 9 1"/></svg>
<!-- GRID -->
<div class="a" id="sheet">
<div class="a" style="left:0;top:0;width:1047px;height:28px;background:#0d0d0d"></div>
<svg style="left:14px;top:7px" width="22" height="19" viewBox="0 0 22 19"><path d="M22 0V19H0z" fill="#5c5c5c"/></svg>
<div class="a" style="left:38px;top:1px;width:94px;height:27px;border-left:1px solid #363636"></div>
<div class="t" style="left:79px;top:5.5px;font-size:20px;color:#d2d2d2;transform:scaleX(0.9745);transform-origin:0 0;">A</div>
<div class="a" style="left:132px;top:1px;width:100px;height:27px;border-left:1px solid #363636"></div>
<div class="t" style="left:176px;top:5.5px;font-size:20px;color:#d2d2d2;transform:scaleX(0.9745);transform-origin:0 0;">B</div>
<div class="a" style="left:232px;top:1px;width:141px;height:27px;border-left:1px solid #363636"></div>
<div class="t" style="left:296.5px;top:5.5px;font-size:20px;color:#d2d2d2;transform:scaleX(0.9000);transform-origin:0 0;">C</div>
<div class="a" style="left:373px;top:1px;width:221px;height:27px;background:#5a5a5a;border-bottom:2px solid #356f52;border-left:1px solid #6e6e6e"></div>
<div class="t" style="left:477.5px;top:5.5px;font-size:20px;color:#e0e0e0;transform:scaleX(0.9000);transform-origin:0 0;">D</div>
<div class="a" style="left:594px;top:1px;width:219px;height:27px;background:#5a5a5a;border-bottom:2px solid #356f52;border-left:1px solid #6e6e6e"></div>
<div class="t" style="left:698.75px;top:5.5px;font-size:20px;color:#e0e0e0;transform:scaleX(0.7871);transform-origin:0 0;">E</div>
<div class="a" style="left:813px;top:1px;width:220px;height:27px;background:#5a5a5a;border-bottom:2px solid #356f52;border-left:1px solid #6e6e6e"></div>
<div class="t" style="left:918.25px;top:5.5px;font-size:20px;color:#e0e0e0;transform:scaleX(0.8594);transform-origin:0 0;">F</div>
<div class="a" style="left:1033px;top:1px;width:14px;height:27px;border-left:1px solid #363636"></div>
<div class="a" style="left:0;top:28px;width:38px;height:32px;background:#0d0d0d;border-bottom:1px solid #262626"></div>
<div class="t" style="left:12.8px;top:34.5px;font-size:22px;color:#e8e8e8;transform:scaleX(1.0134);transform-origin:0 0;">1</div>
<div class="a" style="left:0;top:60px;width:38px;height:32px;background:#0d0d0d;border-bottom:1px solid #262626"></div>
<div class="t" style="left:12.8px;top:66.5px;font-size:22px;color:#e8e8e8;transform:scaleX(1.0134);transform-origin:0 0;">2</div>
<div class="a" style="left:0;top:92px;width:38px;height:32px;background:#5a5a5a;border-bottom:1px solid #707070;border-right:2px solid #2f7a52"></div>
<div class="t" style="left:12.8px;top:98.5px;font-size:22px;color:#f0f0f0;transform:scaleX(1.0134);transform-origin:0 0;">3</div>
<div class="a" style="left:0;top:124px;width:38px;height:32px;background:#5a5a5a;border-bottom:1px solid #707070;border-right:2px solid #2f7a52"></div>
<div class="t" style="left:12.8px;top:130.5px;font-size:22px;color:#f0f0f0;transform:scaleX(1.0134);transform-origin:0 0;">4</div>
<div class="a" style="left:0;top:156px;width:38px;height:32px;background:#5a5a5a;border-bottom:1px solid #707070;border-right:2px solid #2f7a52"></div>
<div class="t" style="left:12.8px;top:162.5px;font-size:22px;color:#f0f0f0;transform:scaleX(1.0134);transform-origin:0 0;">5</div>
<div class="a" style="left:0;top:188px;width:38px;height:32px;background:#5a5a5a;border-bottom:1px solid #707070;border-right:2px solid #2f7a52"></div>
<div class="t" style="left:12.8px;top:194.5px;font-size:22px;color:#f0f0f0;transform:scaleX(1.0134);transform-origin:0 0;">6</div>
<div class="a" style="left:0;top:220px;width:38px;height:32px;background:#5a5a5a;border-bottom:1px solid #707070;border-right:2px solid #2f7a52"></div>
<div class="t" style="left:12.8px;top:226.5px;font-size:22px;color:#f0f0f0;transform:scaleX(1.0134);transform-origin:0 0;">7</div>
<div class="a" style="left:0;top:252px;width:38px;height:32px;background:#5a5a5a;border-bottom:1px solid #707070;border-right:2px solid #2f7a52"></div>
<div class="t" style="left:12.8px;top:258.5px;font-size:22px;color:#f0f0f0;transform:scaleX(1.0134);transform-origin:0 0;">8</div>
<div class="a" style="left:0;top:284px;width:38px;height:32px;background:#5a5a5a;border-bottom:1px solid #707070;border-right:2px solid #2f7a52"></div>
<div class="t" style="left:12.8px;top:290.5px;font-size:22px;color:#f0f0f0;transform:scaleX(1.0134);transform-origin:0 0;">9</div>
<div class="a" style="left:0;top:316px;width:38px;height:32px;background:#5a5a5a;border-bottom:1px solid #707070;border-right:2px solid #2f7a52"></div>
<div class="t" style="left:7.6px;top:322.5px;font-size:22px;color:#f0f0f0;transform:scaleX(0.9317);transform-origin:0 0;">10</div>
<div class="a" style="left:0;top:348px;width:38px;height:32px;background:#5a5a5a;border-bottom:1px solid #707070;border-right:2px solid #2f7a52"></div>
<div class="t" style="left:7.6px;top:354.5px;font-size:22px;color:#f0f0f0;transform:scaleX(0.9983);transform-origin:0 0;">11</div>
<div class="a" style="left:0;top:380px;width:38px;height:32px;background:#5a5a5a;border-bottom:1px solid #707070;border-right:2px solid #2f7a52"></div>
<div class="t" style="left:7.6px;top:386.5px;font-size:22px;color:#f0f0f0;transform:scaleX(0.9317);transform-origin:0 0;">12</div>
<div class="a" style="left:0;top:412px;width:38px;height:30px;background:#0d0d0d;border-bottom:1px solid #262626"></div>
<div class="t" style="left:7.6px;top:417.5px;font-size:22px;color:#e8e8e8;transform:scaleX(0.9317);transform-origin:0 0;">13</div>
<div class="a" style="left:0;top:442px;width:38px;height:30px;background:#0d0d0d;border-bottom:1px solid #262626"></div>
<div class="t" style="left:7.6px;top:447.5px;font-size:22px;color:#e8e8e8;transform:scaleX(0.9317);transform-origin:0 0;">14</div>
<div class="a" style="left:0;top:472px;width:38px;height:30px;background:#0d0d0d;border-bottom:1px solid #262626"></div>
<div class="t" style="left:7.6px;top:477.5px;font-size:22px;color:#e8e8e8;transform:scaleX(0.9317);transform-origin:0 0;">15</div>
<div class="a" style="left:132px;top:28px;width:1px;height:460px;background:#e1e1e1"></div>
<div class="a" style="left:232px;top:28px;width:1px;height:460px;background:#e1e1e1"></div>
<div class="a" style="left:373px;top:28px;width:1px;height:460px;background:#e1e1e1"></div>
<div class="a" style="left:594px;top:28px;width:1px;height:460px;background:#e1e1e1"></div>
<div class="a" style="left:813px;top:28px;width:1px;height:460px;background:#e1e1e1"></div>
<div class="a" style="left:1033px;top:28px;width:1px;height:460px;background:#e1e1e1"></div>
<div class="a" style="left:38px;top:60px;width:1009px;height:1px;background:#e1e1e1"></div>
<div class="a" style="left:38px;top:412px;width:1009px;height:1px;background:#e1e1e1"></div>
<div class="a" style="left:38px;top:442px;width:1009px;height:1px;background:#e1e1e1"></div>
<div class="a" style="left:38px;top:472px;width:1009px;height:1px;background:#e1e1e1"></div>
<div class="a" style="left:1033px;top:92px;width:14px;height:1px;background:#e1e1e1"></div>
<div class="a" style="left:1033px;top:124px;width:14px;height:1px;background:#e1e1e1"></div>
<div class="a" style="left:1033px;top:156px;width:14px;height:1px;background:#e1e1e1"></div>
<div class="a" style="left:1033px;top:188px;width:14px;height:1px;background:#e1e1e1"></div>
<div class="a" style="left:1033px;top:220px;width:14px;height:1px;background:#e1e1e1"></div>
<div class="a" style="left:1033px;top:252px;width:14px;height:1px;background:#e1e1e1"></div>
<div class="a" style="left:1033px;top:284px;width:14px;height:1px;background:#e1e1e1"></div>
<div class="a" style="left:1033px;top:316px;width:14px;height:1px;background:#e1e1e1"></div>
<div class="a" style="left:1033px;top:348px;width:14px;height:1px;background:#e1e1e1"></div>
<div class="a" style="left:1033px;top:380px;width:14px;height:1px;background:#e1e1e1"></div>
<div class="a" style="left:1033px;top:412px;width:14px;height:1px;background:#e1e1e1"></div>
<div class="a" style="left:38px;top:60px;width:995px;height:32px;background:#4371c3"></div>
<div class="t" style="left:41.4px;top:67px;font-size:22.5px;color:#fff;font-weight:bold;transform:scaleX(0.8877);transform-origin:0 0;">Jaar</div>
<div class="a" style="left:114.5px;top:73.5px;width:16.500px;height:16.500px;background:#eeeff4;border:1px solid #d9dde8"></div>
<svg style="left:119.4px;top:80.3px" width="7" height="4" viewBox="0 0 7 4"><path d="M0 0h6.800L3.400 3.700z" fill="#333"/></svg>
<div class="t" style="left:137px;top:67px;font-size:22.5px;color:#fff;font-weight:bold;transform:scaleX(0.9823);transform-origin:0 0;">Maand</div>
<div class="a" style="left:214.5px;top:73.5px;width:16.500px;height:16.500px;background:#eeeff4;border:1px solid #d9dde8"></div>
<svg style="left:219.4px;top:80.3px" width="7" height="4" viewBox="0 0 7 4"><path d="M0 0h6.800L3.400 3.700z" fill="#333"/></svg>
<div class="t" style="left:236.7px;top:67px;font-size:22.5px;color:#fff;font-weight:bold;transform:scaleX(0.9388);transform-origin:0 0;">Product</div>
<div class="a" style="left:355.5px;top:73.5px;width:16.500px;height:16.500px;background:#eeeff4;border:1px solid #d9dde8"></div>
<svg style="left:360.4px;top:80.3px" width="7" height="4" viewBox="0 0 7 4"><path d="M0 0h6.800L3.400 3.700z" fill="#333"/></svg>
<div class="t" style="left:378px;top:67px;font-size:22.5px;color:#fff;font-weight:bold;transform:scaleX(0.9629);transform-origin:0 0;">Verkochte eenhede</div>
<div class="a" style="left:576.5px;top:73.5px;width:16.500px;height:16.500px;background:#eeeff4;border:1px solid #d9dde8"></div>
<svg style="left:581.4px;top:80.3px" width="7" height="4" viewBox="0 0 7 4"><path d="M0 0h6.800L3.400 3.700z" fill="#333"/></svg>
<div class="t" style="left:597.5px;top:67px;font-size:22.5px;color:#fff;font-weight:bold;transform:scaleX(0.9746);transform-origin:0 0;">Netto-omzet (USD)</div>
<div class="a" style="left:795.5px;top:73.5px;width:16.500px;height:16.500px;background:#eeeff4;border:1px solid #d9dde8"></div>
<svg style="left:800.4px;top:80.3px" width="7" height="4" viewBox="0 0 7 4"><path d="M0 0h6.800L3.400 3.700z" fill="#333"/></svg>
<div class="t" style="left:817px;top:67px;font-size:22.5px;color:#fff;font-weight:bold;transform:scaleX(0.9759);transform-origin:0 0;">Marketinguitgaven</div>
<div class="a" style="left:1015.5px;top:73.5px;width:16.500px;height:16.500px;background:#eeeff4;border:1px solid #d9dde8"></div>
<svg style="left:1020.4px;top:80.3px" width="7" height="4" viewBox="0 0 7 4"><path d="M0 0h6.800L3.400 3.700z" fill="#333"/></svg>
<div class="a" style="left:38px;top:92px;width:335px;height:32px;background:#d1d9eb"></div>
<div class="a" style="left:373px;top:92px;width:660px;height:32px;background:#a4b1c9"></div>
<div class="a" style="left:374px;top:92px;width:220px;height:32px;background:#e8edf5"></div>
<div class="a" style="left:38px;top:123px;width:335px;height:1px;background:#bac7df"></div>
<div class="a" style="left:373px;top:123px;width:660px;height:1px;background:#8b9cba"></div>
<div class="a" style="left:132px;top:92px;width:1px;height:31px;background:#c6d0e5"></div>
<div class="a" style="left:232px;top:92px;width:1px;height:31px;background:#c6d0e5"></div>
<div class="a" style="left:594px;top:92px;width:1px;height:31px;background:#93a2bd"></div>
<div class="a" style="left:813px;top:92px;width:1px;height:31px;background:#93a2bd"></div>
<div class="t" style="left:77.7px;top:99px;font-size:22px;color:#0c0c0c;transform:scaleX(1.0277);transform-origin:0 0;">2024</div>
<div class="t" style="left:137px;top:99px;font-size:22px;color:#0c0c0c;transform:scaleX(0.9877);transform-origin:0 0;">jan</div>
<div class="t" style="left:236.7px;top:99px;font-size:22px;color:#0c0c0c;transform:scaleX(1.0503);transform-origin:0 0;">Winterjas</div>
<div class="t" style="left:552.6px;top:99px;font-size:22px;color:#0c0c0c;transform:scaleX(1.0407);transform-origin:0 0;">170</div>
<div class="t" style="left:758.5px;top:99px;font-size:22px;color:#0c0c0c;transform:scaleX(1.0420);transform-origin:0 0;">8500</div>
<div class="t" style="left:978.8px;top:99px;font-size:22px;color:#0c0c0c;transform:scaleX(1.0420);transform-origin:0 0;">8500</div>
<div class="a" style="left:38px;top:124px;width:335px;height:32px;background:#eaeef6"></div>
<div class="a" style="left:373px;top:124px;width:660px;height:32px;background:#c5c4c2"></div>
<div class="a" style="left:38px;top:155px;width:335px;height:1px;background:#bac7df"></div>
<div class="a" style="left:373px;top:155px;width:660px;height:1px;background:#8b9cba"></div>
<div class="a" style="left:132px;top:124px;width:1px;height:31px;background:#d5dcea"></div>
<div class="a" style="left:232px;top:124px;width:1px;height:31px;background:#d5dcea"></div>
<div class="a" style="left:594px;top:124px;width:1px;height:31px;background:#aeb1b8"></div>
<div class="a" style="left:813px;top:124px;width:1px;height:31px;background:#aeb1b8"></div>
<div class="t" style="left:77.7px;top:131px;font-size:22px;color:#0c0c0c;transform:scaleX(1.0277);transform-origin:0 0;">2024</div>
<div class="t" style="left:137px;top:131px;font-size:22px;color:#0c0c0c;transform:scaleX(1.0136);transform-origin:0 0;">feb</div>
<div class="t" style="left:236.7px;top:131px;font-size:22px;color:#0c0c0c;transform:scaleX(1.0503);transform-origin:0 0;">Winterjas</div>
<div class="t" style="left:552.6px;top:131px;font-size:22px;color:#0c0c0c;transform:scaleX(1.0407);transform-origin:0 0;">140</div>
<div class="t" style="left:758.5px;top:131px;font-size:22px;color:#0c0c0c;transform:scaleX(1.0420);transform-origin:0 0;">7000</div>
<div class="t" style="left:978.8px;top:131px;font-size:22px;color:#0c0c0c;transform:scaleX(1.0420);transform-origin:0 0;">7000</div>
<div class="a" style="left:38px;top:156px;width:335px;height:32px;background:#d1d9eb"></div>
<div class="a" style="left:373px;top:156px;width:660px;height:32px;background:#a4b1c9"></div>
<div class="a" style="left:38px;top:187px;width:335px;height:1px;background:#bac7df"></div>
<div class="a" style="left:373px;top:187px;width:660px;height:1px;background:#8b9cba"></div>
<div class="a" style="left:132px;top:156px;width:1px;height:31px;background:#c6d0e5"></div>
<div class="a" style="left:232px;top:156px;width:1px;height:31px;background:#c6d0e5"></div>
<div class="a" style="left:594px;top:156px;width:1px;height:31px;background:#93a2bd"></div>
<div class="a" style="left:813px;top:156px;width:1px;height:31px;background:#93a2bd"></div>
<div class="t" style="left:77.7px;top:163px;font-size:22px;color:#0c0c0c;transform:scaleX(1.0277);transform-origin:0 0;">2024</div>
<div class="t" style="left:137px;top:163px;font-size:22px;color:#0c0c0c;transform:scaleX(1.0955);transform-origin:0 0;">mrt</div>
<div class="t" style="left:236.7px;top:163px;font-size:22px;color:#0c0c0c;transform:scaleX(1.0503);transform-origin:0 0;">Winterjas</div>
<div class="t" style="left:552.6px;top:163px;font-size:22px;color:#0c0c0c;transform:scaleX(1.0407);transform-origin:0 0;">120</div>
<div class="t" style="left:758.5px;top:163px;font-size:22px;color:#0c0c0c;transform:scaleX(1.0420);transform-origin:0 0;">6000</div>
<div class="t" style="left:978.8px;top:163px;font-size:22px;color:#0c0c0c;transform:scaleX(1.0420);transform-origin:0 0;">6000</div>
<div class="a" style="left:38px;top:188px;width:335px;height:32px;background:#eaeef6"></div>
<div class="a" style="left:373px;top:188px;width:660px;height:32px;background:#c5c4c2"></div>
<div class="a" style="left:38px;top:219px;width:335px;height:1px;background:#bac7df"></div>
<div class="a" style="left:373px;top:219px;width:660px;height:1px;background:#8b9cba"></div>
<div class="a" style="left:132px;top:188px;width:1px;height:31px;background:#d5dcea"></div>
<div class="a" style="left:232px;top:188px;width:1px;height:31px;background:#d5dcea"></div>
<div class="a" style="left:594px;top:188px;width:1px;height:31px;background:#aeb1b8"></div>
<div class="a" style="left:813px;top:188px;width:1px;height:31px;background:#aeb1b8"></div>
<div class="t" style="left:77.7px;top:195px;font-size:22px;color:#0c0c0c;transform:scaleX(1.0277);transform-origin:0 0;">2024</div>
<div class="t" style="left:137px;top:195px;font-size:22px;color:#0c0c0c;transform:scaleX(1.0000);transform-origin:0 0;">apr</div>
<div class="t" style="left:236.7px;top:195px;font-size:22px;color:#0c0c0c;transform:scaleX(1.0407);transform-origin:0 0;">T-shirt</div>
<div class="t" style="left:552.6px;top:195px;font-size:22px;color:#0c0c0c;transform:scaleX(1.0407);transform-origin:0 0;">220</div>
<div class="t" style="left:758.5px;top:195px;font-size:22px;color:#0c0c0c;transform:scaleX(1.0420);transform-origin:0 0;">4400</div>
<div class="t" style="left:978.8px;top:195px;font-size:22px;color:#0c0c0c;transform:scaleX(1.0420);transform-origin:0 0;">4400</div>
<div class="a" style="left:38px;top:220px;width:335px;height:32px;background:#d1d9eb"></div>
<div class="a" style="left:373px;top:220px;width:660px;height:32px;background:#a4b1c9"></div>
<div class="a" style="left:38px;top:251px;width:335px;height:1px;background:#bac7df"></div>
<div class="a" style="left:373px;top:251px;width:660px;height:1px;background:#8b9cba"></div>
<div class="a" style="left:132px;top:220px;width:1px;height:31px;background:#c6d0e5"></div>
<div class="a" style="left:232px;top:220px;width:1px;height:31px;background:#c6d0e5"></div>
<div class="a" style="left:594px;top:220px;width:1px;height:31px;background:#93a2bd"></div>
<div class="a" style="left:813px;top:220px;width:1px;height:31px;background:#93a2bd"></div>
<div class="t" style="left:77.7px;top:227px;font-size:22px;color:#0c0c0c;transform:scaleX(1.0277);transform-origin:0 0;">2024</div>
<div class="t" style="left:137px;top:227px;font-size:22px;color:#0c0c0c;transform:scaleX(1.0042);transform-origin:0 0;">mei</div>
<div class="t" style="left:236.7px;top:227px;font-size:22px;color:#0c0c0c;transform:scaleX(1.0407);transform-origin:0 0;">T-shirt</div>
<div class="t" style="left:552.6px;top:227px;font-size:22px;color:#0c0c0c;transform:scaleX(1.0407);transform-origin:0 0;">270</div>
<div class="t" style="left:758.5px;top:227px;font-size:22px;color:#0c0c0c;transform:scaleX(1.0420);transform-origin:0 0;">5400</div>
<div class="t" style="left:978.8px;top:227px;font-size:22px;color:#0c0c0c;transform:scaleX(1.0420);transform-origin:0 0;">5400</div>
<div class="a" style="left:38px;top:252px;width:335px;height:32px;background:#eaeef6"></div>
<div class="a" style="left:373px;top:252px;width:660px;height:32px;background:#c5c4c2"></div>
<div class="a" style="left:38px;top:283px;width:335px;height:1px;background:#bac7df"></div>
<div class="a" style="left:373px;top:283px;width:660px;height:1px;background:#8b9cba"></div>
<div class="a" style="left:132px;top:252px;width:1px;height:31px;background:#d5dcea"></div>
<div class="a" style="left:232px;top:252px;width:1px;height:31px;background:#d5dcea"></div>
<div class="a" style="left:594px;top:252px;width:1px;height:31px;background:#aeb1b8"></div>
<div class="a" style="left:813px;top:252px;width:1px;height:31px;background:#aeb1b8"></div>
<div class="t" style="left:77.7px;top:259px;font-size:22px;color:#0c0c0c;transform:scaleX(1.0277);transform-origin:0 0;">2024</div>
<div class="t" style="left:137px;top:259px;font-size:22px;color:#0c0c0c;transform:scaleX(1.0286);transform-origin:0 0;">jun</div>
<div class="t" style="left:236.7px;top:259px;font-size:22px;color:#0c0c0c;transform:scaleX(1.0407);transform-origin:0 0;">T-shirt</div>
<div class="t" style="left:552.6px;top:259px;font-size:22px;color:#0c0c0c;transform:scaleX(1.0407);transform-origin:0 0;">320</div>
<div class="t" style="left:758.5px;top:259px;font-size:22px;color:#0c0c0c;transform:scaleX(1.0420);transform-origin:0 0;">6400</div>
<div class="t" style="left:978.8px;top:259px;font-size:22px;color:#0c0c0c;transform:scaleX(1.0420);transform-origin:0 0;">6400</div>
<div class="a" style="left:38px;top:284px;width:335px;height:32px;background:#d1d9eb"></div>
<div class="a" style="left:373px;top:284px;width:660px;height:32px;background:#a4b1c9"></div>
<div class="a" style="left:38px;top:315px;width:335px;height:1px;background:#bac7df"></div>
<div class="a" style="left:373px;top:315px;width:660px;height:1px;background:#8b9cba"></div>
<div class="a" style="left:132px;top:284px;width:1px;height:31px;background:#c6d0e5"></div>
<div class="a" style="left:232px;top:284px;width:1px;height:31px;background:#c6d0e5"></div>
<div class="a" style="left:594px;top:284px;width:1px;height:31px;background:#93a2bd"></div>
<div class="a" style="left:813px;top:284px;width:1px;height:31px;background:#93a2bd"></div>
<div class="t" style="left:77.7px;top:291px;font-size:22px;color:#0c0c0c;transform:scaleX(1.0277);transform-origin:0 0;">2024</div>
<div class="t" style="left:137px;top:291px;font-size:22px;color:#0c0c0c;transform:scaleX(1.0449);transform-origin:0 0;">jul</div>
<div class="t" style="left:236.7px;top:291px;font-size:22px;color:#0c0c0c;transform:scaleX(1.0314);transform-origin:0 0;">Korte broek</div>
<div class="t" style="left:552.6px;top:291px;font-size:22px;color:#0c0c0c;transform:scaleX(1.0407);transform-origin:0 0;">200</div>
<div class="t" style="left:758.5px;top:291px;font-size:22px;color:#0c0c0c;transform:scaleX(1.0420);transform-origin:0 0;">4000</div>
<div class="t" style="left:978.8px;top:291px;font-size:22px;color:#0c0c0c;transform:scaleX(1.0420);transform-origin:0 0;">4000</div>
<div class="a" style="left:38px;top:316px;width:335px;height:32px;background:#eaeef6"></div>
<div class="a" style="left:373px;top:316px;width:660px;height:32px;background:#c5c4c2"></div>
<div class="a" style="left:38px;top:347px;width:335px;height:1px;background:#bac7df"></div>
<div class="a" style="left:373px;top:347px;width:660px;height:1px;background:#8b9cba"></div>
<div class="a" style="left:132px;top:316px;width:1px;height:31px;background:#d5dcea"></div>
<div class="a" style="left:232px;top:316px;width:1px;height:31px;background:#d5dcea"></div>
<div class="a" style="left:594px;top:316px;width:1px;height:31px;background:#aeb1b8"></div>
<div class="a" style="left:813px;top:316px;width:1px;height:31px;background:#aeb1b8"></div>
<div class="t" style="left:77.7px;top:323px;font-size:22px;color:#0c0c0c;transform:scaleX(1.0277);transform-origin:0 0;">2024</div>
<div class="t" style="left:137px;top:323px;font-size:22px;color:#0c0c0c;transform:scaleX(0.9698);transform-origin:0 0;">aug</div>
<div class="t" style="left:236.7px;top:323px;font-size:22px;color:#0c0c0c;transform:scaleX(1.0314);transform-origin:0 0;">Korte broek</div>
<div class="t" style="left:552.6px;top:323px;font-size:22px;color:#0c0c0c;transform:scaleX(1.0407);transform-origin:0 0;">240</div>
<div class="t" style="left:758.5px;top:323px;font-size:22px;color:#0c0c0c;transform:scaleX(1.0420);transform-origin:0 0;">4800</div>
<div class="t" style="left:978.8px;top:323px;font-size:22px;color:#0c0c0c;transform:scaleX(1.0420);transform-origin:0 0;">4800</div>
<div class="a" style="left:38px;top:348px;width:335px;height:32px;background:#d1d9eb"></div>
<div class="a" style="left:373px;top:348px;width:660px;height:32px;background:#a4b1c9"></div>
<div class="a" style="left:38px;top:379px;width:335px;height:1px;background:#bac7df"></div>
<div class="a" style="left:373px;top:379px;width:660px;height:1px;background:#8b9cba"></div>
<div class="a" style="left:132px;top:348px;width:1px;height:31px;background:#c6d0e5"></div>
<div class="a" style="left:232px;top:348px;width:1px;height:31px;background:#c6d0e5"></div>
<div class="a" style="left:594px;top:348px;width:1px;height:31px;background:#93a2bd"></div>
<div class="a" style="left:813px;top:348px;width:1px;height:31px;background:#93a2bd"></div>
<div class="t" style="left:77.7px;top:355px;font-size:22px;color:#0c0c0c;transform:scaleX(1.0277);transform-origin:0 0;">2024</div>
<div class="t" style="left:137px;top:355px;font-size:22px;color:#0c0c0c;transform:scaleX(0.9303);transform-origin:0 0;">sep</div>
<div class="t" style="left:236.7px;top:355px;font-size:22px;color:#0c0c0c;transform:scaleX(1.0314);transform-origin:0 0;">Korte broek</div>
<div class="t" style="left:552.6px;top:355px;font-size:22px;color:#0c0c0c;transform:scaleX(1.0407);transform-origin:0 0;">270</div>
<div class="t" style="left:758.5px;top:355px;font-size:22px;color:#0c0c0c;transform:scaleX(1.0420);transform-origin:0 0;">5400</div>
<div class="t" style="left:978.8px;top:355px;font-size:22px;color:#0c0c0c;transform:scaleX(1.0420);transform-origin:0 0;">5400</div>
<div class="a" style="left:38px;top:380px;width:335px;height:32px;background:#eaeef6"></div>
<div class="a" style="left:373px;top:380px;width:660px;height:32px;background:#c5c4c2"></div>
<div class="a" style="left:38px;top:411px;width:335px;height:1px;background:#bac7df"></div>
<div class="a" style="left:373px;top:411px;width:660px;height:1px;background:#8b9cba"></div>
<div class="a" style="left:132px;top:380px;width:1px;height:31px;background:#d5dcea"></div>
<div class="a" style="left:232px;top:380px;width:1px;height:31px;background:#d5dcea"></div>
<div class="a" style="left:594px;top:380px;width:1px;height:31px;background:#aeb1b8"></div>
<div class="a" style="left:813px;top:380px;width:1px;height:31px;background:#aeb1b8"></div>
<div class="t" style="left:77.7px;top:387px;font-size:22px;color:#0c0c0c;transform:scaleX(1.0277);transform-origin:0 0;">2024</div>
<div class="t" style="left:137px;top:387px;font-size:22px;color:#0c0c0c;transform:scaleX(1.0563);transform-origin:0 0;">okt</div>
<div class="t" style="left:236.7px;top:387px;font-size:22px;color:#0c0c0c;transform:scaleX(1.0331);transform-origin:0 0;">Trui</div>
<div class="t" style="left:552.6px;top:387px;font-size:22px;color:#0c0c0c;transform:scaleX(1.0407);transform-origin:0 0;">150</div>
<div class="t" style="left:758.5px;top:387px;font-size:22px;color:#0c0c0c;transform:scaleX(1.0420);transform-origin:0 0;">7500</div>
<div class="t" style="left:978.8px;top:387px;font-size:22px;color:#0c0c0c;transform:scaleX(1.0420);transform-origin:0 0;">7500</div>
<div class="a" style="left:372px;top:91px;width:663px;height:322px;border:1.500px solid #2d7350;border-left-width:2px"></div>
<div class="a" style="left:1031px;top:409px;width:6px;height:6px;background:#2b7049;border:1px solid #fff"></div>
</div>
<div class="a" style="left:1047px;top:229px;width:20px;height:487px;background:#1d1d1d"></div>
<svg style="left:1052.500px;top:234.500px" width="11" height="8" viewBox="0 0 11 8"><path d="M5.300.3 10.500 7.300H.2z" fill="#8a8a8a"/></svg>
<div class="a" style="left:1053px;top:247.500px;width:9.800px;height:401px;border-radius:5px;background:#808080"></div>
<svg style="left:1052.500px;top:705.500px" width="11" height="8" viewBox="0 0 11 8"><path d="M5.300 7.300 10.500.3H.2z" fill="#8a8a8a"/></svg>
<div class="a" style="left:0;top:716px;width:1068px;height:30px;background:#2b2b2b"></div>
<svg style="left:28px;top:726px" width="5" height="9" viewBox="0 0 5 9" fill="none" stroke="#9a9a9a" stroke-width="1.400" stroke-linecap="round" stroke-linejoin="round"><path d="M4 1 1 4.500 4 8"/></svg>
<svg style="left:56px;top:726px" width="5" height="9" viewBox="0 0 5 9" fill="none" stroke="#9a9a9a" stroke-width="1.400" stroke-linecap="round" stroke-linejoin="round"><path d="M1 1 4 4.500 1 8"/></svg>
<div class="a" style="left:104.500px;top:716px;width:62px;height:26.500px;background:#fff;border-bottom:2.500px solid #3b8a5c;border-radius:0 0 3px 3px"></div>
<div class="t" style="left:115.5px;top:719.6px;font-size:15px;color:#2a7148;font-weight:bold;transform:scaleX(0.9670);transform-origin:0 0;">Sheet</div>
<svg style="left:201.500px;top:721px" width="19" height="19" viewBox="0 0 19 19" fill="none" stroke="#e0e0e0" stroke-width="1.300" stroke-linecap="round"><circle cx="9.500" cy="9.500" r="8.300"/><path d="M9.500 5.200v8.600M5.200 9.500h8.600"/></svg>
<div class="a" style="left:646px;top:724.500px;width:2.400px;height:2.400px;border-radius:50%;background:#e0e0e0;box-shadow:0 4.500px 0 #e0e0e0,0 9px 0 #e0e0e0"></div>
<div class="a" style="left:663px;top:722px;width:384px;height:16px;border-radius:3px;background:#222"></div>
<svg style="left:667.500px;top:725px" width="8" height="10" viewBox="0 0 8 10"><path d="M.5 5 7.500.5v9z" fill="#a0a0a0"/></svg>
<div class="a" style="left:681px;top:725.500px;width:301px;height:9px;border-radius:4.500px;background:#929292"></div>
<svg style="left:1034.500px;top:725px" width="8" height="10" viewBox="0 0 8 10"><path d="M7.500 5 .5.5v9z" fill="#a0a0a0"/></svg>
<!-- COPILOT PANE -->
<div class="a" style="left:1069px;top:222px;width:339px;height:524px;background:#0d0d0d"></div>
<div class="a" style="left:1067.500px;top:229px;width:1.800px;height:517px;background:#2a2a2a"></div>
<div class="t" style="left:1083px;top:244.5px;font-size:24px;color:#86c19a;transform:scaleX(1.0106);transform-origin:0 0;">Copilot</div>
<svg style="left:1333.500px;top:252.500px" width="13" height="8" viewBox="0 0 13 8" fill="none" stroke="#e8e8e8" stroke-width="1.400" stroke-linecap="round" stroke-linejoin="round"><path d="M1 1 6.500 6.500 12 1"/></svg>
<svg style="left:1377px;top:249px" width="13" height="13" viewBox="0 0 13 13" stroke="#f0f0f0" stroke-width="1.500" stroke-linecap="round"><path d="M1 1 12 12M12 1 1 12"/></svg>
<!-- previous card bottom edge -->
<div class="a" style="left:1092.500px;top:277.500px;width:274.500px;height:5px;background:#131313;border:1.500px solid #3a3a3a;border-top:none;border-radius:0 0 7px 7px"></div>
<!-- card 1 -->
<div class="a card" style="top:293px;height:84px"></div>
<svg style="left:1105.500px;top:305.500px" width="20" height="20" viewBox="0 0 20 20" fill="none">
 <path d="M.6.600h17v13.500H.6zM.6 4.300h17M.6 9.200h17M6.200 4.300v9.800M11.800 4.300v9.800" stroke="#d2d4a4" stroke-width="1.100" stroke-dasharray="2.600 .600"/>
 <path d="M14.500 9.200a4.700 4.700 0 1 1-2.800 8.500L9.800 19l.7-2.400a4.700 4.700 0 0 1 4-7.400z" fill="#35c27a" stroke="#2b2b2b" stroke-width=".8"/><path d="M12.800 13h3.400M12.800 15h2" stroke="#0e3a22" stroke-width=".9"/>
</svg>
<div class="t" style="left:1133px;top:306.8px;font-size:15.5px;color:#f2f2f2;transform:scaleX(1.0112);transform-origin:0 0;">Maak een kolom</div>
<div class="t" style="left:1133px;top:328.3px;font-size:15.5px;color:#f2f2f2;transform:scaleX(1.0382);transform-origin:0 0;">'Marketinguitgaven per</div>
<div class="t" style="left:1133px;top:349.6px;font-size:15.5px;color:#f2f2f2;transform:scaleX(0.9858);transform-origin:0 0;">eenheid'</div>
<!-- card 2 -->
<div class="a card" style="top:388px;height:84px"></div>
<svg style="left:1105.500px;top:400.500px" width="20" height="20" viewBox="0 0 20 20" fill="none">
 <path d="M.6.600h17v13.500H.6zM.6 4.300h17M.6 9.200h17M6.200 4.300v9.800M11.800 4.300v9.800" stroke="#d2d4a4" stroke-width="1.100" stroke-dasharray="2.600 .600"/>
 <circle cx="14.300" cy="14.300" r="5" fill="#2e9fe0" stroke="#2b2b2b" stroke-width=".8"/><path d="M12 13h4.600M12 15.600h4.600M14.300 11.500v5.600" stroke="#0f3b5c" stroke-width=".9"/>
</svg>
<div class="t" style="left:1133px;top:402.4px;font-size:15.5px;color:#f2f2f2;transform:scaleX(1.0246);transform-origin:0 0;">Voeg een kolom toe die</div>
<div class="t" style="left:1133px;top:423.6px;font-size:15.5px;color:#f2f2f2;transform:scaleX(1.0216);transform-origin:0 0;">'Maand' en 'Product'</div>
<div class="t" style="left:1133px;top:444.8px;font-size:15.5px;color:#f2f2f2;transform:scaleX(1.0225);transform-origin:0 0;">combineert</div>
<!-- input box -->
<div class="a" style="left:1083px;top:617px;width:312px;height:115px;background:#292929;border:2px solid #4f9f6e;border-radius:8px"></div>
<div class="t" style="left:1094.4px;top:629.7px;font-size:14.5px;color:#f0f0f0;transform:scaleX(0.9861);transform-origin:0 0;">Voeg een kolom toe met bedragen</div>
<div class="t" style="left:1094.4px;top:648.6px;font-size:14.5px;color:#f0f0f0;transform:scaleX(0.9801);transform-origin:0 0;">omgerekend van dollars naar euro's uit de</div>
<div class="t" style="left:1094.4px;top:667.7px;font-size:14.5px;color:#f0f0f0;transform:scaleX(0.9826);transform-origin:0 0;">kolom Netto-omzet (USD)</div>
<div class="a" style="left:1258.500px;top:665.500px;width:1.200px;height:18px;background:#e8e8e8"></div>
<svg style="left:1368.500px;top:631px" width="13" height="13" viewBox="0 0 13 13" stroke="#e8e8e8" stroke-width="1.300" stroke-linecap="round"><path d="M1 1 12 12M12 1 1 12"/></svg>
<!-- paperclip -->
<svg style="left:1096px;top:701.500px" width="17" height="17" viewBox="0 0 17 17" fill="none" stroke="#e8e8e8" stroke-width="1.300" stroke-linecap="round" stroke-linejoin="round"><path d="M13.500 6.500 7 13c-1.300 1.300-3.200 1.300-4.400.1S1.400 10 2.700 8.700l6.800-6.800c.9-.9 2.400-.9 3.300 0s.9 2.400 0 3.300L6.300 11.700c-.5.500-1.200.5-1.600 0s-.5-1.100 0-1.600l5.800-5.800"/></svg>
<!-- screenshot -->
<svg style="left:1129.500px;top:702px" width="18" height="17" viewBox="0 0 18 17" fill="none" stroke="#e8e8e8" stroke-width="1.300" stroke-linejoin="round"><rect x=".7" y=".7" width="15.600" height="14.600" rx="2.500"/><path d="M5.500 3.500v8h8M3.500 5.500h8v8" stroke-width="1.200"/><path d="M12.500 15.300h5" stroke-width="2"/></svg>
<!-- send -->
<svg style="left:1365px;top:701px" width="19" height="19" viewBox="0 0 19 19" fill="none" stroke="#5a5a5a" stroke-width="1.400" stroke-linejoin="round"><path d="M1.500 1.500 18 9.500 1.500 17.500 4.500 9.500zM4.500 9.500H11"/></svg>
<!-- STATUS BAR -->
<div class="a" id="status"></div>
<div class="t" style="left:7.7px;top:751px;font-size:12.5px;color:#e6e6e6;transform:scaleX(0.8826);transform-origin:0 0;">Larus</div>
<svg style="left:53.500px;top:750px" width="15" height="15" viewBox="0 0 15 15" fill="none" stroke="#e0e0e0" stroke-width="1.100" stroke-linejoin="round"><rect x=".6" y=".6" width="13.800" height="12.800" rx="2"/><path d="M.6 4h13.800M4.500 4v9.400"/><rect x="7" y="7" width="6" height="6" fill="#1b1b1b"/><path d="M7.500 7.500h5v5h-5zM7.500 10h5"/></svg>
<div class="t" style="left:72.9px;top:751px;font-size:12.5px;color:#e6e6e6;transform:scaleX(0.9440);transform-origin:0 0;">Werkmapstatistieken</div>
<div class="t" style="left:623.6px;top:751px;font-size:12.5px;color:#e6e6e6;transform:scaleX(0.9298);transform-origin:0 0;">Gemiddelde: 2515,541667</div>
<div class="t" style="left:779.7px;top:751px;font-size:12.5px;color:#e6e6e6;transform:scaleX(0.9281);transform-origin:0 0;">Aantal: 222</div>
<div class="t" style="left:856.5px;top:751px;font-size:12.5px;color:#e6e6e6;transform:scaleX(0.9279);transform-origin:0 0;">Som: 362238</div>
<svg style="left:952px;top:750px" width="14" height="14" viewBox="0 0 14 14" fill="none" stroke="#e0e0e0" stroke-width="1.100" stroke-linejoin="round" stroke-linecap="round"><circle cx="5" cy="4.500" r="2.300"/><path d="M.8 13c0-3 1.800-4.500 4.200-4.500s3 1 3.500 2"/><path d="M8 .8h5.300v4.500H10.500L9 6.800V5.300H8z"/></svg>
<div class="t" style="left:968.8px;top:751px;font-size:12.5px;color:#e6e6e6;transform:scaleX(0.9396);transform-origin:0 0;">Feedback geven aan Microsoft</div>
<div class="a" style="left:1144.500px;top:746px;width:38.500px;height:22px;background:#363636"></div>
<svg style="left:1156.500px;top:750px" width="14" height="13" viewBox="0 0 14 13" fill="none" stroke="#f0f0f0" stroke-width="1.100"><rect x=".6" y=".6" width="12.800" height="11.800"/><path d="M.6 4.500h12.800M.6 8.500h12.800M4.900.6v11.800M9.200.6v11.800"/></svg>
<svg style="left:1196.500px;top:750px" width="15" height="13" viewBox="0 0 15 13" fill="none" stroke="#e6e6e6" stroke-width="1.100"><rect x=".6" y=".6" width="13.800" height="11.800"/><path d="M5 .6v6h5V.6M7.500.6v6"/></svg>
<div class="a" style="left:1230px;top:756.300px;width:8px;height:1.300px;background:#e6e6e6"></div>
<div class="a" style="left:1245px;top:756.300px;width:98px;height:1.200px;background:#cfcfcf"></div>
<div class="a" style="left:1292px;top:750px;width:4.500px;height:13px;background:#d2d2d2;border-radius:1px"></div>
<svg style="left:1349.500px;top:752.500px" width="9" height="9" viewBox="0 0 9 9" stroke="#e6e6e6" stroke-width="1.300"><path d="M0 4.500h9M4.500 0v9"/></svg>
<div class="t" style="left:1370.6px;top:751px;font-size:12.5px;color:#e6e6e6;transform:scaleX(0.8758);transform-origin:0 0;">100%</div>
</body></html>
